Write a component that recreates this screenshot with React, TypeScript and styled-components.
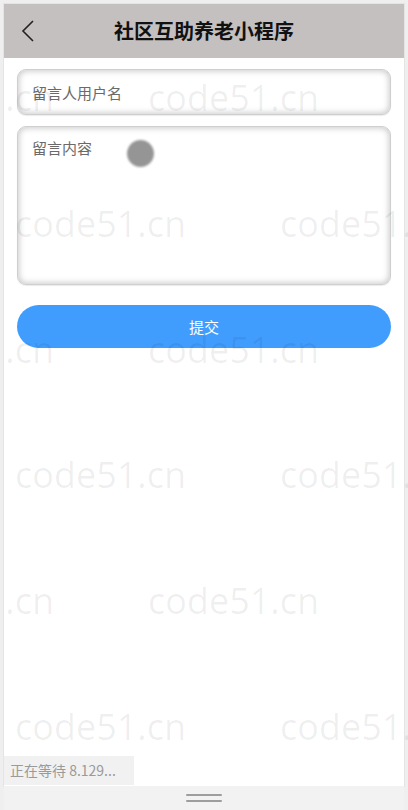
import React from "react";
import styled, { createGlobalStyle } from "styled-components";

const GlobalStyle = createGlobalStyle`
  html, body { margin: 0; padding: 0; }
  body {
    background: #efefef;
    font-family: "Noto Sans CJK SC", "Noto Sans", sans-serif;
  }
  * { box-sizing: border-box; }
`;

const Viewport = styled.div`
  position: relative;
  width: 408px;
  height: 810px;
  overflow: hidden;
  display: flex;
  flex-direction: column;
  background: #efefef;
  padding: 4px 4px 0 4px;
`;

const Phone = styled.div`
  flex: 1;
  background: #ffffff;
  display: flex;
  flex-direction: column;
  box-shadow: 0 0 0 1px #e4e4e4;
`;

const Header = styled.header`
  height: 54px;
  background: #c4c0bf;
  display: grid;
  grid-template-columns: 54px 1fr 54px;
  align-items: center;
`;

const BackButton = styled.button`
  border: none;
  background: transparent;
  padding: 0 0 0 17px;
  height: 54px;
  display: flex;
  align-items: center;
  cursor: pointer;
`;

const Title = styled.h1`
  margin: 0;
  text-align: center;
  font-size: 20px;
  font-weight: 700;
  color: #111;
  line-height: 54px;
`;

const Form = styled.form`
  display: flex;
  flex-direction: column;
  padding: 11px 13px 0 13px;
  gap: 11px;
`;

const Field = styled.div<{ $height: number }>`
  position: relative;
  height: ${(p) => p.$height}px;
  border-radius: 9px;
  border: 1px solid #cfcfcf;
  background: #fff;
  box-shadow: inset 0 0 6px 1px rgba(0, 0, 0, 0.22), 0 1px 1px rgba(0, 0, 0, 0.08);
`;

const TextInput = styled.input`
  width: 100%;
  height: 100%;
  border: none;
  background: transparent;
  outline: none;
  padding: 0 14px;
  font-family: inherit;
  font-size: 15px;
  color: #333;
  &::placeholder { color: #6a6a6a; }
`;

const TextArea = styled.textarea`
  width: 100%;
  height: 100%;
  border: none;
  background: transparent;
  outline: none;
  resize: none;
  padding: 10px 14px;
  font-family: inherit;
  font-size: 15px;
  line-height: 22px;
  color: #333;
  &::placeholder { color: #6a6a6a; }
`;

const TouchDot = styled.span`
  position: absolute;
  left: 109px;
  top: 13px;
  width: 27px;
  height: 27px;
  border-radius: 50%;
  background: #959595;
  filter: blur(0.8px);
`;

const SubmitButton = styled.button`
  margin-top: 9px;
  height: 43px;
  border: none;
  border-radius: 22px;
  background: #419dfd;
  color: #fff;
  font-family: inherit;
  font-size: 15px;
  cursor: pointer;
`;

const Status = styled.div`
  margin-top: auto;
  width: 130px;
  height: 29px;
  background: #f1f1f1;
  color: #9a9a9a;
  font-size: 14px;
  line-height: 29px;
  padding-left: 6px;
  white-space: nowrap;
  overflow: hidden;
  margin-bottom: 1px;
`;

const HomeBar = styled.div`
  height: 24px;
  display: flex;
  flex-direction: column;
  align-items: center;
  justify-content: center;
  gap: 4px;
  background: #f2f2f2;
`;

const HandleLine = styled.span`
  width: 36px;
  height: 2px;
  background: #9d9d9d;
  border-radius: 1px;
`;

const WatermarkLayer = styled.div`
  position: absolute;
  inset: 0;
  pointer-events: none;
  overflow: hidden;
`;

const Mark = styled.span`
  position: absolute;
  font-family: "Open Sans", "Noto Sans", sans-serif;
  font-size: 36px;
  line-height: 1;
  color: rgba(0, 0, 0, 0.065);
  white-space: nowrap;
`;

const ChevronLeft = () => (
  <svg width="14" height="22" viewBox="0 0 14 22" fill="none">
    <polyline points="12,1 2,11 12,21" stroke="#222" strokeWidth="1.6" fill="none" />
  </svg>
);

const marks: { x: number; y: number }[] = [];
for (let r = 0; r < 6; r++) {
  const baseline = 107 + r * 125.8;
  const start = r % 2 === 0 ? 148 - 265 : 15;
  for (let c = 0; c < 3; c++) {
    marks.push({ x: start + c * 265, y: baseline });
  }
}

export default function App() {
  return (
    <>
      <GlobalStyle />
      <Viewport>
        <Phone>
          <Header>
            <BackButton type="button" aria-label="返回">
              <ChevronLeft />
            </BackButton>
            <Title>社区互助养老小程序</Title>
            <span />
          </Header>
          <Form onSubmit={(e) => e.preventDefault()}>
            <Field $height={46}>
              <TextInput placeholder="留言人用户名" />
            </Field>
            <Field $height={159}>
              <TextArea placeholder="留言内容" />
              <TouchDot />
            </Field>
            <SubmitButton type="submit">提交</SubmitButton>
          </Form>
          <Status>正在等待 8.129...</Status>
        </Phone>
        <HomeBar>
          <HandleLine />
          <HandleLine />
        </HomeBar>
        <WatermarkLayer>
          {marks.map((m, i) => (
            <Mark key={i} style={{ left: m.x, top: m.y - 27 }}>
              code51.cn
            </Mark>
          ))}
        </WatermarkLayer>
      </Viewport>
    </>
  );
}
